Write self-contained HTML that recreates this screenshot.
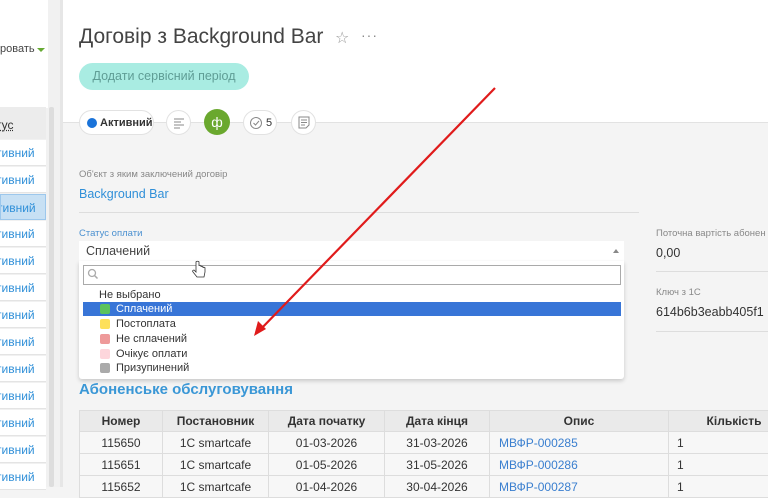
<!DOCTYPE html>
<html><head><meta charset="utf-8"><style>
*{margin:0;padding:0;box-sizing:border-box}
body{width:768px;height:487px;overflow:hidden;position:relative;background:#f4f4f4;font-family:"Liberation Sans","DejaVu Sans",sans-serif;color:#333}
.a{position:absolute}
.lrow{position:absolute;left:0;width:46px;height:26px;border-bottom:1px solid #e4e4e4;background:#fff;color:#2f8fd8;font-size:12px;line-height:26px;text-indent:-4px;white-space:nowrap;overflow:hidden}
.chip{position:absolute;top:110px;height:25px;border-radius:13px;background:#fff;border:1px solid #e2e2e2;font-size:11px;line-height:23px}
.opt{position:absolute;left:83px;width:538px;height:14px;font-size:11px;line-height:14px;padding-left:16px;color:#333}
.sq{position:absolute;left:17px;top:2px;width:10px;height:10px;border-radius:2px}
.opt.s{padding-left:33px}
td,th{border:1px solid #ddd;font-size:12px;height:22px;text-align:center;white-space:nowrap}
th{background:#eaeaea;font-weight:bold;height:21px}
td{background:#f7f7f7}
</style></head><body>
<div class="a" style="left:0;top:0;width:768px;height:122px;background:#fff"></div>
<div class="a" style="left:0;top:0;width:60px;height:487px;background:#f1f1f1"></div>
<div class="a" style="left:0;top:0;width:48px;height:108px;background:#fff"></div>
<div class="a" style="left:0;top:43px;font-size:11px;color:#444">ровать</div>
<div class="a" style="left:37px;top:48px;width:0;height:0;border-left:4px solid transparent;border-right:4px solid transparent;border-top:4px solid #6a3"></div>
<div class="a" style="left:0;top:107px;width:46px;height:32px;background:#ececec;font-size:12px;line-height:36px;color:#333;text-indent:-4px;text-decoration:underline dotted">тус</div>
<div class="a" style="left:49px;top:107px;width:5px;height:380px;background:#ddd;border-radius:2px"></div>
<div class="a" style="left:60px;top:0;width:3px;height:487px;background:#e6e6e6"></div>
<div class="lrow" style="top:140px">тивний</div>
<div class="lrow" style="top:167px">тивний</div>
<div class="lrow" style="top:194px;background:#c7e0f4;border:1px solid #9cc7ec">тивний</div>
<div class="lrow" style="top:221px">тивний</div>
<div class="lrow" style="top:248px">тивний</div>
<div class="lrow" style="top:275px">тивний</div>
<div class="lrow" style="top:302px">тивний</div>
<div class="lrow" style="top:329px">тивний</div>
<div class="lrow" style="top:356px">тивний</div>
<div class="lrow" style="top:383px">тивний</div>
<div class="lrow" style="top:410px">тивний</div>
<div class="lrow" style="top:437px">тивний</div>
<div class="lrow" style="top:464px">тивний</div>
<div class="a" style="left:79px;top:25px;font-size:21px;color:#444">Договір з Background Bar</div>
<div class="a" style="left:335px;top:28px;font-size:16px;color:#999">☆</div>
<div class="a" style="left:361px;top:27px;font-size:14px;color:#888;letter-spacing:1px">···</div>
<div class="a" style="left:79px;top:63px;width:170px;height:27px;border-radius:14px;background:#a9ece2;color:#5f9d95;font-size:12.5px;line-height:27px;text-align:center">Додати сервісний період</div>
<div class="a" style="left:63px;top:122px;width:705px;height:1px;background:#e2e2e2"></div>
<div class="chip" style="left:79px;width:75px;padding-left:20px;font-weight:bold;color:#333;line-height:24px"><span class="a" style="left:7px;top:7px;width:10px;height:10px;border-radius:50%;background:#1a73d9"></span>Активний</div>
<div class="chip" style="left:166px;width:25px"><svg class="a" style="left:6px;top:6px" width="12" height="12"><path d="M1 2h10M1 5h7M1 8h10M1 11h6" stroke="#888" stroke-width="1"/></svg></div>
<div class="a" style="left:204px;top:109px;width:26px;height:26px;border-radius:50%;background:#6aa82e;color:#fff;font-size:14px;line-height:26px;text-align:center">ф</div>
<div class="chip" style="left:243px;width:34px"><svg class="a" style="left:5px;top:5px" width="14" height="14"><circle cx="7" cy="7" r="5.5" fill="none" stroke="#888"/><path d="M4.5 7l2 2 3.5-4" fill="none" stroke="#888"/></svg><span class="a" style="left:22px;top:1px;font-size:11px">5</span></div>
<div class="chip" style="left:291px;width:25px"><svg class="a" style="left:6px;top:5px" width="12" height="13"><path d="M1 1h10v8l-3 3H1z M3 4h6M3 6.5h6M3 9h4" fill="none" stroke="#888"/></svg></div>
<div class="a" style="left:79px;top:169px;font-size:9.5px;color:#888">Об'єкт з яким заключений договір</div>
<div class="a" style="left:79px;top:187px;font-size:12.5px;color:#2f8fd8">Background Bar</div>
<div class="a" style="left:79px;top:212px;width:560px;height:1px;background:#ddd"></div>
<div class="a" style="left:79px;top:228px;font-size:9.5px;color:#4a90d0">Статус оплати</div>
<div class="a" style="left:79px;top:241px;width:545px;height:20px;background:#fff"></div>
<div class="a" style="left:86px;top:244px;font-size:12.5px;color:#444">Сплачений</div>
<div class="a" style="left:613px;top:249px;width:0;height:0;border-left:3px solid transparent;border-right:3px solid transparent;border-bottom:4px solid #888"></div>
<div class="a" style="left:79px;top:261px;width:545px;height:118px;background:#fff;border-radius:0 0 3px 3px;box-shadow:0 2px 4px rgba(0,0,0,.18)"></div>
<div class="a" style="left:83px;top:265px;width:538px;height:20px;border:1px solid #aaa;background:#fff"></div>
<svg class="a" style="left:87px;top:268px" width="12" height="12"><circle cx="5" cy="5" r="3.5" fill="none" stroke="#aaa" stroke-width="1.3"/><path d="M7.5 7.5l3 3" stroke="#aaa" stroke-width="1.5"/></svg>
<div class="opt" style="top:288px">Не выбрано</div>
<div class="opt s" style="top:302px;background:#3875d7;color:#fff"><span class="sq" style="background:#5cc35c"></span>Сплачений</div>
<div class="opt s" style="top:317px"><span class="sq" style="background:#fde05a"></span>Постоплата</div>
<div class="opt s" style="top:332px"><span class="sq" style="background:#ee9a9a"></span>Не сплачений</div>
<div class="opt s" style="top:347px"><span class="sq" style="background:#fdd6dc"></span>Очікує оплати</div>
<div class="opt s" style="top:361px"><span class="sq" style="background:#aaa"></span>Призупинений</div>
<div class="a" style="left:656px;top:228px;font-size:9.5px;color:#888;white-space:nowrap">Поточна вартість абонен</div>
<div class="a" style="left:656px;top:246px;font-size:12.5px;color:#333">0,00</div>
<div class="a" style="left:656px;top:271px;width:112px;height:1px;background:#ddd"></div>
<div class="a" style="left:656px;top:287px;font-size:9.5px;color:#888">Ключ з 1С</div>
<div class="a" style="left:656px;top:305px;font-size:12.5px;color:#333">614b6b3eabb405f1</div>
<div class="a" style="left:656px;top:331px;width:112px;height:1px;background:#ddd"></div>
<div class="a" style="left:79px;top:381px;font-size:15px;font-weight:bold;color:#3a97d6">Абоненське обслуговування</div>
<table class="a" style="left:79px;top:410px;border-collapse:collapse;width:720px;table-layout:fixed">
<colgroup><col style="width:83px"><col style="width:106px"><col style="width:116px"><col style="width:105px"><col style="width:179px"><col style="width:131px"></colgroup>
<tr><th>Номер</th><th>Постановник</th><th>Дата початку</th><th>Дата кінця</th><th>Опис</th><th>Кількість</th></tr>
<tr><td>115650</td><td>1С smartcafe</td><td>01-03-2026</td><td>31-03-2026</td><td style="text-align:left;padding-left:9px;color:#3a7fcf">МВФР-000285</td><td style="text-align:left;padding-left:8px">1</td></tr>
<tr><td>115651</td><td>1С smartcafe</td><td>01-05-2026</td><td>31-05-2026</td><td style="text-align:left;padding-left:9px;color:#3a7fcf">МВФР-000286</td><td style="text-align:left;padding-left:8px">1</td></tr>
<tr><td>115652</td><td>1С smartcafe</td><td>01-04-2026</td><td>30-04-2026</td><td style="text-align:left;padding-left:9px;color:#3a7fcf">МВФР-000287</td><td style="text-align:left;padding-left:8px">1</td></tr>
</table>
<svg class="a" style="left:0;top:0" width="768" height="487"><path d="M495 88L258 332" stroke="#e01b1b" stroke-width="2.2"/><path d="M254 336l4-15 8 8z" fill="#e01b1b"/>
<path d="M196 262v10l-2-2c-1 0-2 1-1 2l4 5h7l1-5v-4c0-1-2-1-2 0v-1c0-1-2-1-2 0v-1c0-1-2-1-2 0v-4c0-1-3-1-3 0z" fill="#fff" stroke="#333" stroke-width=".8"/></svg>
</body></html>
